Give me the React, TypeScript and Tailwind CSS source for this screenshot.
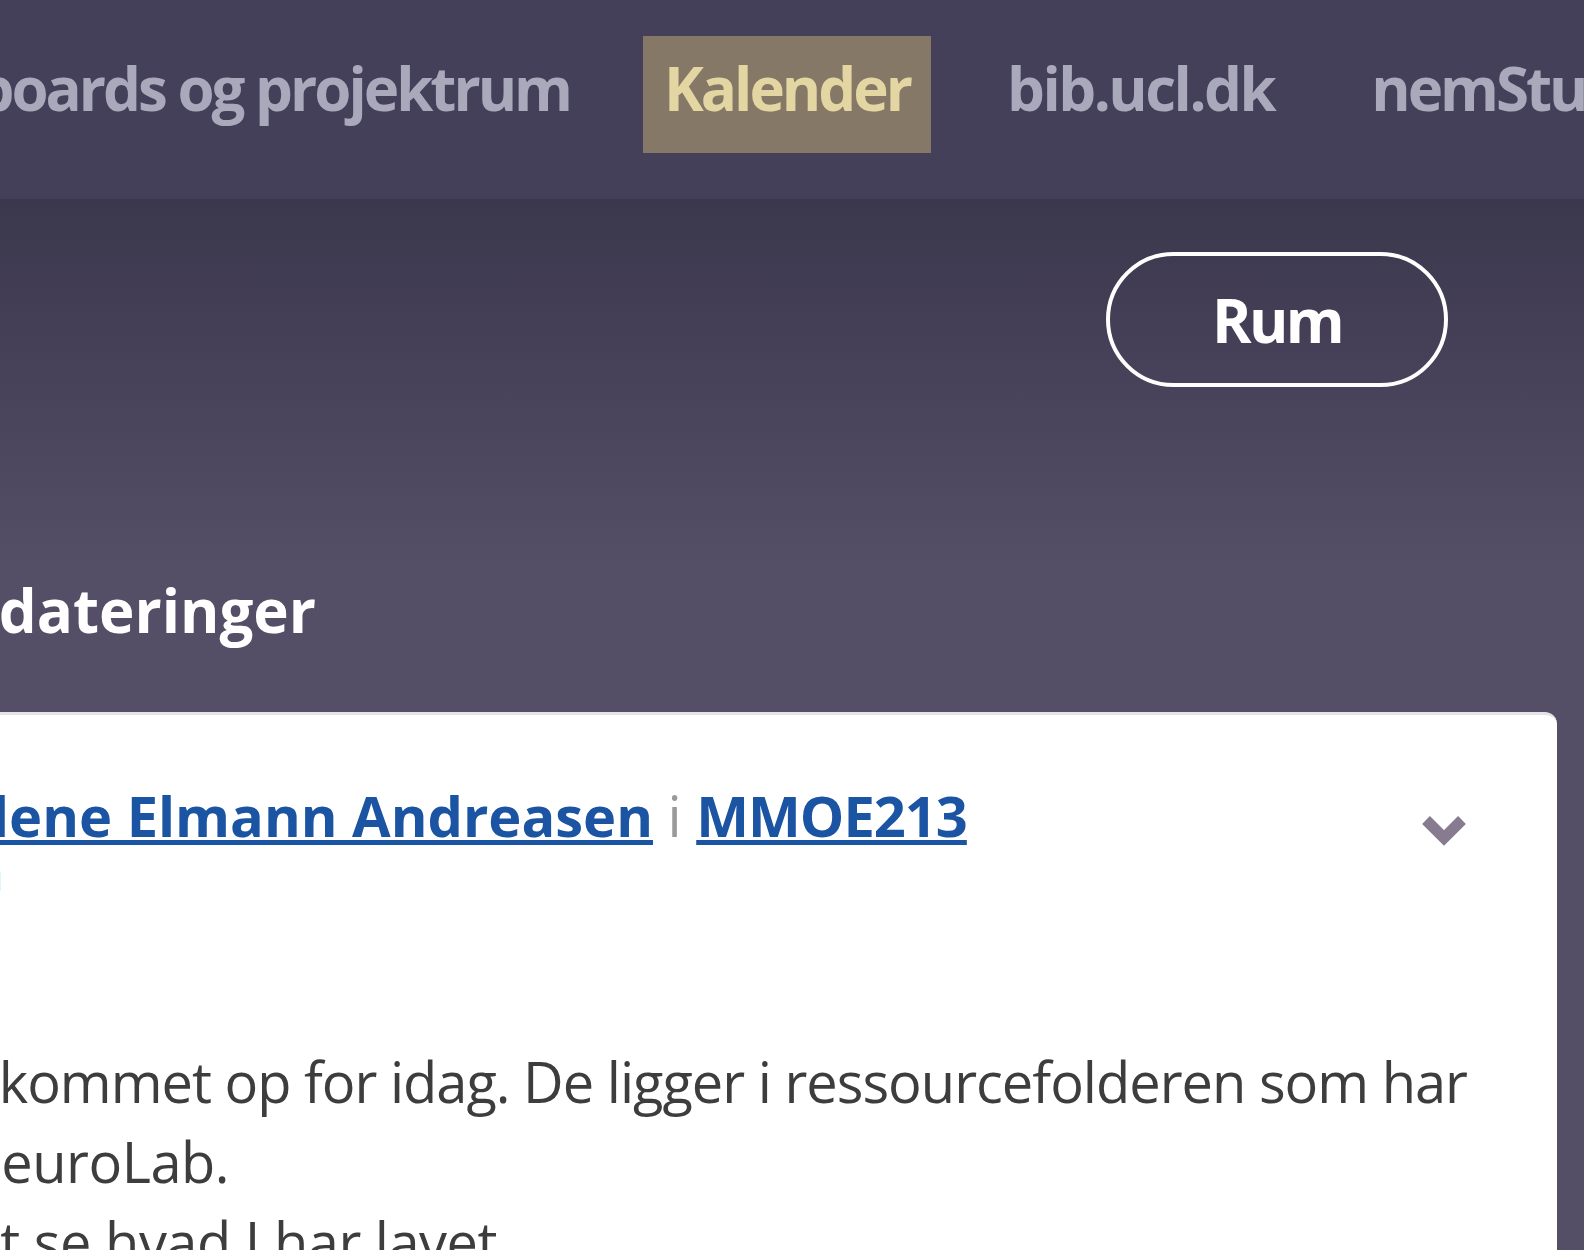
import React from 'react';

const navItems = [
  { label: 'Dashboards og projektrum', active: false, clip: true },
  { label: 'Kalender', active: true, clip: false },
  { label: 'bib.ucl.dk', active: false, clip: false },
  { label: 'nemStudie', active: false, clip: false },
];

const bodyLines = [
  { text: 'Hej alle. Slides er kommet op for idag. De ligger i ressourcefolderen som har', width: 'w-[1467px] tracking-[-1px]' },
  { text: 'navnet NeuroLab.', width: 'w-[229px] tracking-[-0.5px]' },
  { text: 'Jeg glæder mig til at se hvad I har lavet', width: 'w-[497px] tracking-[-0.5px]' },
];

const App = () => {
  return (
    <div className="w-[1584px] h-[1250px] overflow-hidden bg-[#544e66] font-['Open_Sans',sans-serif]">
      {/* Top navigation */}
      <nav className="h-[199px] bg-[#45405a] flex items-start pt-[36px] whitespace-nowrap overflow-hidden text-[60px] font-bold leading-[82px] tracking-[-3px]">
        {navItems.map((item, i) =>
          item.clip ? (
            <div key={item.label} className="w-[591px] shrink-0 h-[117px] pt-[11px] pr-[21px] mr-[52px] flex justify-end overflow-hidden text-[#aaa9bc]">
              <span>{item.label}</span>
            </div>
          ) : (
            <div
              key={item.label}
              className={`shrink-0 h-[117px] pt-[11px] px-[21px] mr-[55px] ${
                item.active ? 'bg-[#857866] text-[#e3d6a2]' : 'text-[#aaa9bc]'
              } ${i === 2 ? 'tracking-[-2.5px]' : ''}`}
            >
              {item.label}
            </div>
          )
        )}
      </nav>

      {/* Header */}
      <section className="h-[513px] bg-[linear-gradient(to_bottom,#3b374d,#544e66_72%)]">
        <div className="flex justify-end pr-[136px] pt-[53px]">
          <button className="w-[342px] h-[135px] rounded-full border-4 border-white text-white text-[60px] font-bold leading-[82px] tracking-[-2.6px]">
            Rum
          </button>
        </div>
        <div className="mt-[182px] w-[316px] flex justify-end overflow-hidden whitespace-nowrap">
          <h2 className="text-white text-[60px] font-bold leading-[82px]">Opdateringer</h2>
        </div>
      </section>

      {/* Update card */}
      <div className="pr-[27px]">
        <div className="h-[600px] bg-white rounded-tr-[12px] border-t-[3px] border-[#e4e3e8]">
          <div className="flex justify-between items-start pr-[90px] pt-[68px]">
            <div className="flex whitespace-nowrap text-[56px] leading-[64px]">
              <div className="w-[653px] flex justify-end overflow-hidden">
                <a className="font-bold text-[#1b54a2] underline decoration-[5px] underline-offset-[3px]">
                  Malene Elmann Andreasen
                </a>
              </div>
              <span className="text-[#9a9a9a]">{'\u00a0i\u00a0'}</span>
              <a className="font-bold text-[#1b54a2] underline decoration-[5px] underline-offset-[3px] tracking-[-1px]">MMOE213</a>
            </div>
            <svg className="mt-[32px]" width="46" height="31" viewBox="0 0 46 31" fill="none">
              <polyline points="5,5 23,23 41,5" stroke="#867b8f" strokeWidth="11" />
            </svg>
          </div>
          <div className="w-[4px] mt-[2px] flex justify-end overflow-hidden whitespace-nowrap">
            <span className="text-[48px] leading-[48px] text-[#a9cfee]">for 2 dage siden</span>
          </div>

          <div className="mt-[144px] text-[56px] leading-[80px] text-[#3d3d3d] whitespace-nowrap">
            {bodyLines.map((line) => (
              <div key={line.text} className={`${line.width} flex justify-end overflow-hidden`}>
                <span>{line.text}</span>
              </div>
            ))}
          </div>
        </div>
      </div>
    </div>
  );
};

export default App;
